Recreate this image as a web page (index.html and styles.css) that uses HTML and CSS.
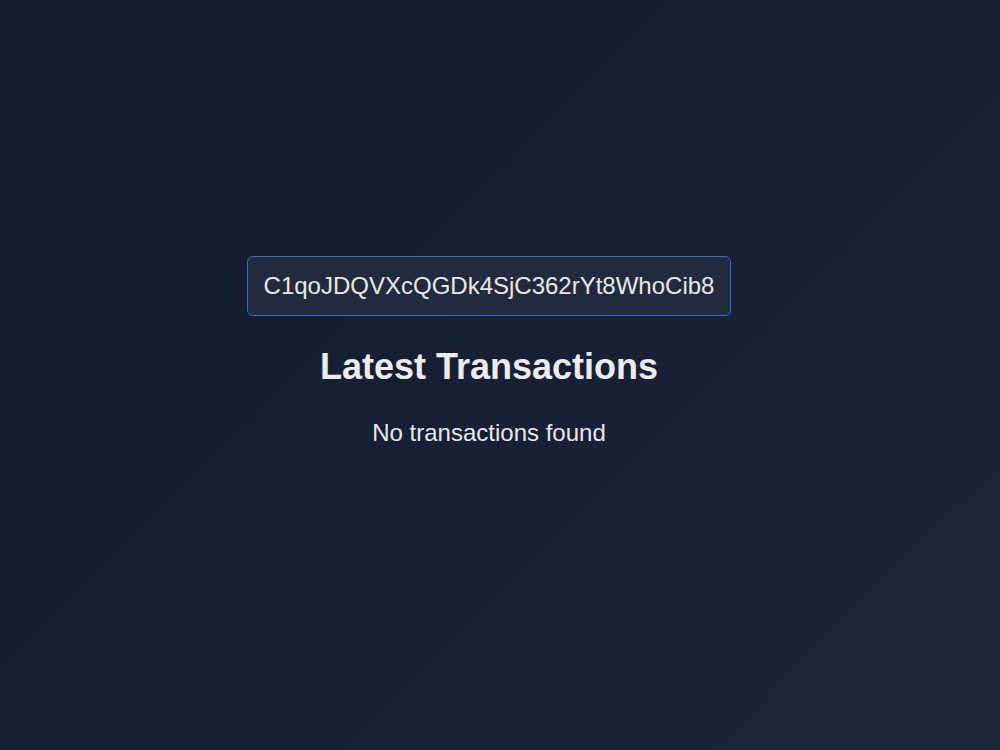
FILE: index.html
```html
<!DOCTYPE html>
<html>
  <head>
    <title>Wallet transactions</title>
    <meta charset="utf-8" />
    <meta name="viewport" content="width=device-width, initial-scale=1" />
    <link rel="stylesheet" href="styles.css">
  </head>
  <body>
    <div class="container">
      <input
        type="text"
        id="address"
        class="address"
        value="C1qoJDQVXcQGDk4SjC362rYt8WhoCib8"
        spellcheck="false"
      />

      <h1>Latest Transactions</h1>

      <p class="empty">No transactions found</p>
    </div>
  </body>
</html>
```

FILE: styles.css
```css
* {
  box-sizing: border-box;
}
html,
body {
  margin: 0;
  height: 100%;
}
body {
  font-family: "Liberation Sans", Arial, sans-serif;
  color: #e8e8ea;
  background: linear-gradient(135deg, #121a2d 0%, #172035 55%, #1b253a 100%);
}

.container {
  display: flex;
  flex-direction: column;
  align-items: center;
  padding: 256px 22px 0 0;
}

.address {
  font-family: "Liberation Sans", Arial, sans-serif;
  font-size: 24px;
  color: #e8e8ea;
  text-align: center;
  width: 484px;
  height: 60px;
  padding: 0 10px;
  border: 1px solid #3a70bd;
  border-radius: 6px;
  background-color: #222b3d;
  outline: none;
}

h1 {
  font-size: 36px;
  margin: 30px 0 0 0;
  color: #ececee;
}

.empty {
  font-size: 24px;
  margin: 31px 0 0 0;
}
```
